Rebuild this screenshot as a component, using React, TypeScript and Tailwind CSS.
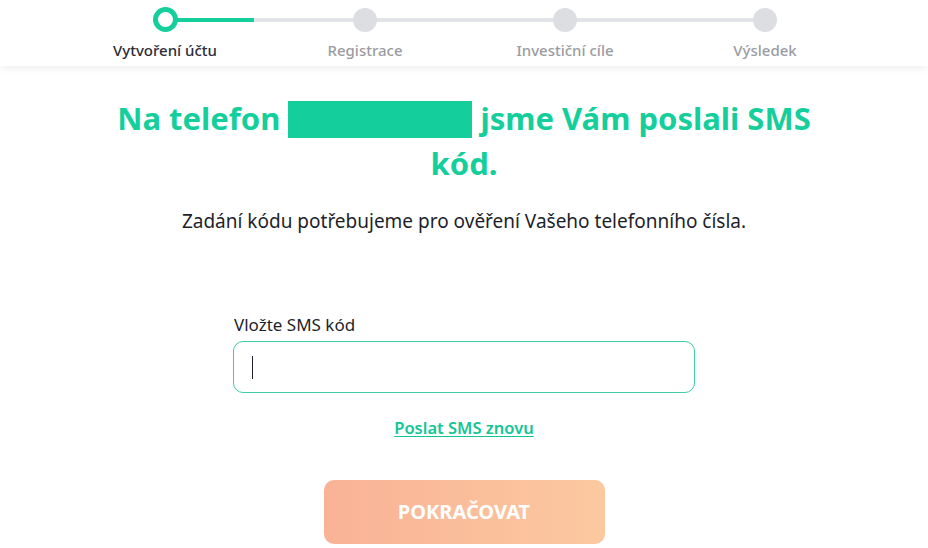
import React from "react";

const steps = ["Vytvoření účtu", "Registrace", "Investiční cíle", "Výsledek"];

export default function App() {
  return (
    <div className="min-h-[548px] bg-white" style={{ fontFamily: "'Noto Sans', Lato, sans-serif" }}>
      <header className="h-[66px] bg-white shadow-[0_2px_8px_rgba(0,0,0,0.07)] relative">
        <div className="relative w-[928px] h-[66px]">
          <div className="absolute left-[165px] w-[599px] top-[18px] h-[4px] bg-[#e2e4e8]" />
          <div className="absolute left-[165px] w-[89px] top-[18px] h-[4px] bg-[#14cf9c]" />
          <div className="flex pl-[65px]">
            {steps.map((s, i) => (
              <div key={s} className="w-[200px] flex flex-col items-center">
                <div
                  className={
                    i === 0
                      ? "relative mt-[7px] w-[25px] h-[25px] rounded-full border-[5px] border-[#14cf9c] bg-white"
                      : "relative mt-[8px] w-[24px] h-[24px] rounded-full bg-[#dcdee2]"
                  }
                />
                <div
                  className={
                    i === 0
                      ? "mt-[8px] text-[15px] leading-[21px] font-medium text-[#2b2d3a]"
                      : "mt-[8px] text-[15px] leading-[21px] font-medium text-[#9a9ca3]"
                  }
                >
                  {s}
                </div>
              </div>
            ))}
          </div>
        </div>
      </header>

      <main className="flex flex-col items-center">
        <h1 className="mt-[30px] w-[720px] text-center text-[31px] leading-[45px] font-bold text-[#14cf9c]">
          Na telefon{" "}
          <span className="inline-block align-middle w-[184px] h-[37px] bg-[#14cf9c] -mt-[4px]" />{" "}
          jsme Vám poslali SMS kód.
        </h1>
        <p className="mt-[22px] text-[19px] leading-[26px] text-[#1d1f2b]">
          Zadání kódu potřebujeme pro ověření Vašeho telefonního čísla.
        </p>

        <div className="mt-[79px] w-[462px]">
          <label className="block text-[17px] leading-[23px] text-[#1d1f2b] ml-[1px]">Vložte SMS kód</label>
          <div className="mt-[5px] h-[52px] rounded-[10px] border border-[#3fcca6] flex items-center pl-[18px]">
            <div className="w-[1px] h-[23px] bg-[#1d1f2b]" />
          </div>
        </div>

        <a href="#" className="mt-[24px] text-[16.5px] leading-[22px] font-semibold text-[#14c596] underline underline-offset-2">
          Poslat SMS znovu
        </a>

        <button className="mt-[41px] w-[281px] h-[64px] rounded-[10px] bg-gradient-to-r from-[#f9b296] to-[#fbc9a0] text-white text-[20px] font-bold">
          POKRAČOVAT
        </button>
      </main>
    </div>
  );
}
